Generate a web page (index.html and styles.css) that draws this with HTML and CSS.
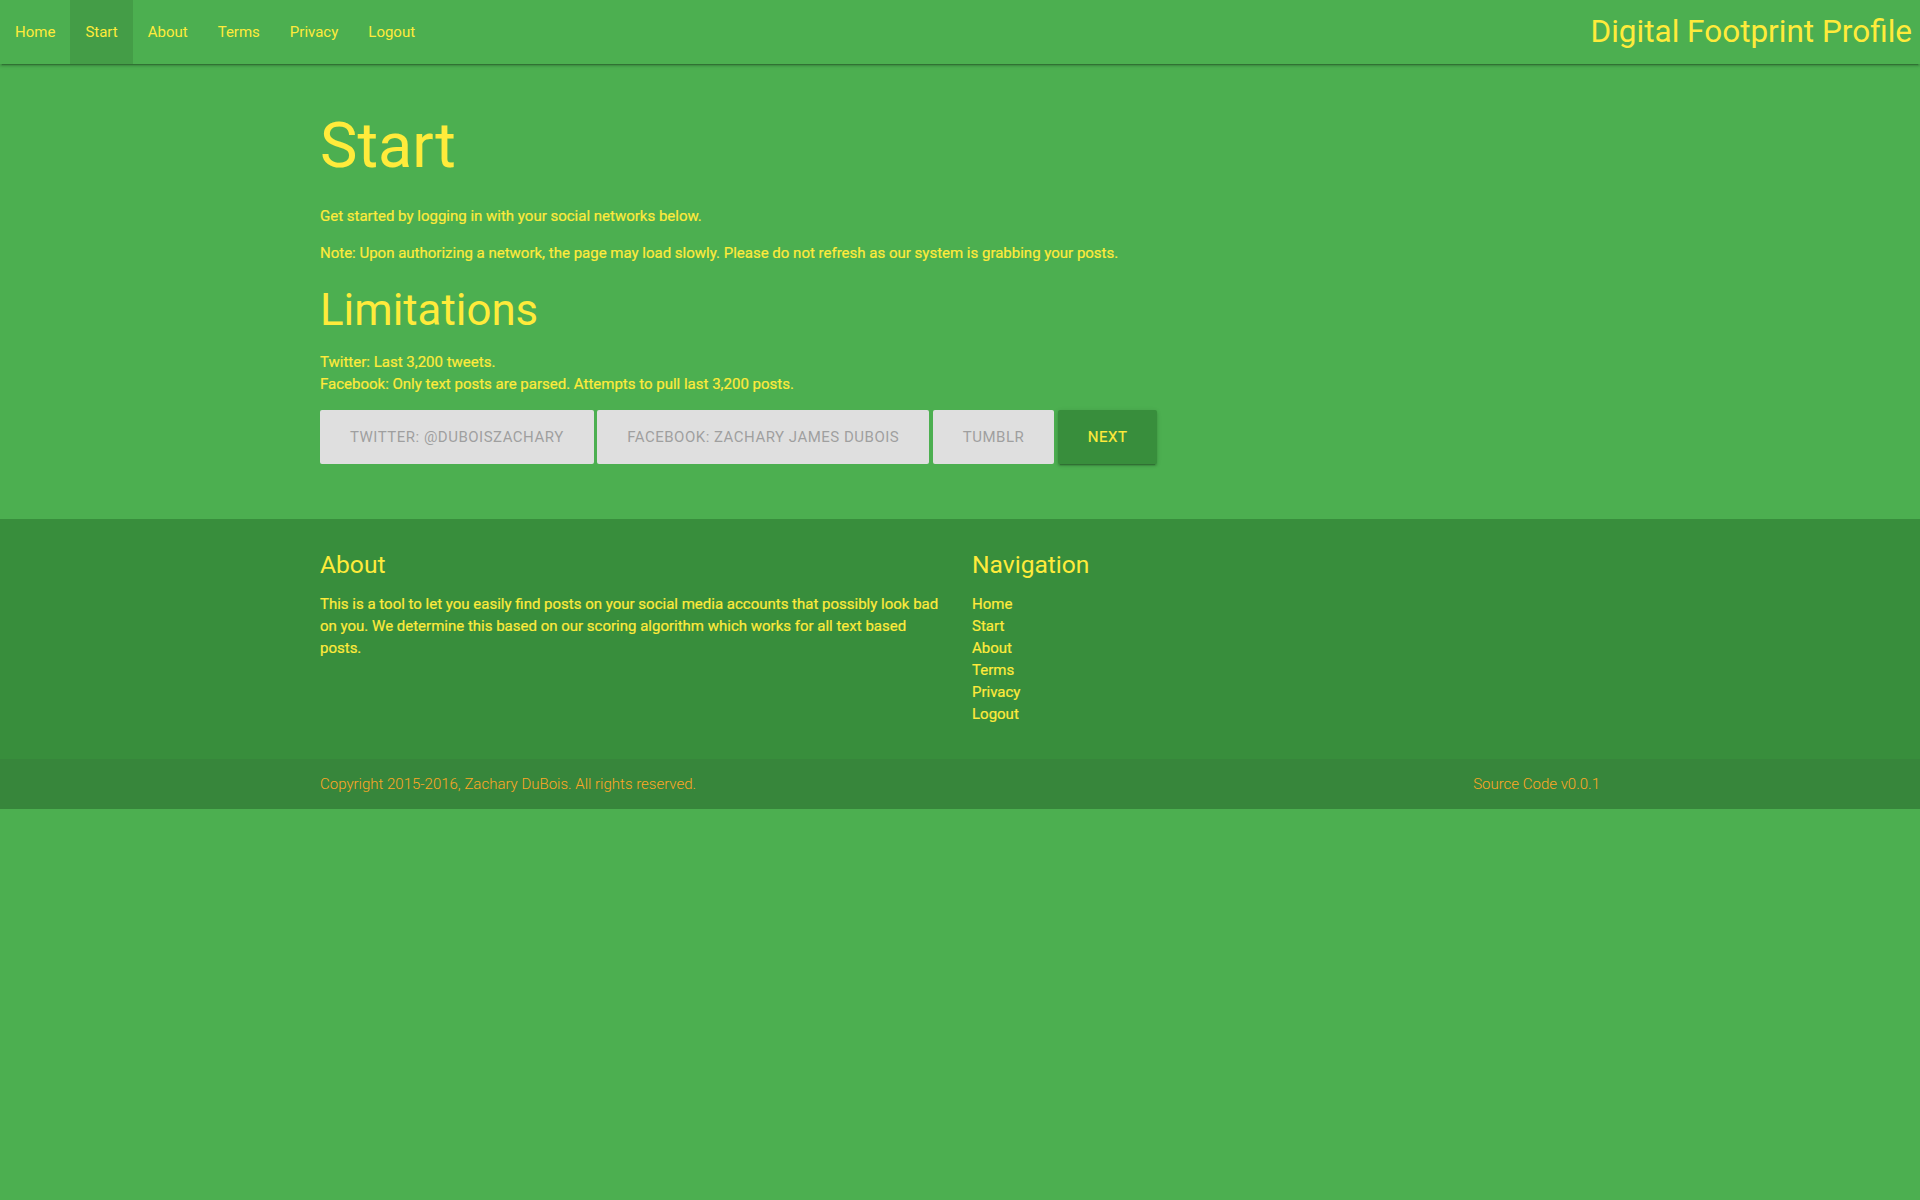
FILE: index.html
```html
<!DOCTYPE html>
<html lang="en">
<head>
<meta charset="utf-8">
<title>Digital Footprint Profile</title>
<link rel="stylesheet" href="styles.css">
</head>
<body>
<nav class="topnav">
  <ul class="nav-links">
    <li><a href="#">Home</a></li>
    <li class="active"><a href="#">Start</a></li>
    <li><a href="#">About</a></li>
    <li><a href="#">Terms</a></li>
    <li><a href="#">Privacy</a></li>
    <li><a href="#">Logout</a></li>
  </ul>
  <a class="brand" href="#">Digital Footprint Profile</a>
</nav>

<main class="container">
  <div class="section">
    <h1 class="title">Start</h1>
    <p>Get started by logging in with your social networks below.</p>
    <p>Note: Upon authorizing a network, the page may load slowly. Please do not refresh as our system is grabbing your posts.</p>
    <h3 class="subtitle">Limitations</h3>
    <p class="limits">Twitter: Last 3,200 tweets.<br>Facebook: Only text posts are parsed. Attempts to pull last 3,200 posts.</p>
    <div class="buttons">
      <a class="btn btn-disabled">Twitter: @duboiszachary</a>
      <a class="btn btn-disabled">Facebook: Zachary James DuBois</a>
      <a class="btn btn-disabled">Tumblr</a>
      <a class="btn btn-next">Next</a>
    </div>
  </div>
</main>

<footer class="page-footer">
  <div class="container footer-cols">
    <div class="footer-col">
      <h5 class="footer-title">About</h5>
      <p class="footer-text">This is a tool to let you easily find posts on your social media accounts that possibly look bad on you. We determine this based on our scoring algorithm which works for all text based posts.</p>
    </div>
    <div class="footer-col">
      <h5 class="footer-title">Navigation</h5>
      <ul class="footer-links">
        <li><a href="#">Home</a></li>
        <li><a href="#">Start</a></li>
        <li><a href="#">About</a></li>
        <li><a href="#">Terms</a></li>
        <li><a href="#">Privacy</a></li>
        <li><a href="#">Logout</a></li>
      </ul>
    </div>
  </div>
  <div class="footer-copyright">
    <div class="container copy-row">
      <span>Copyright 2015-2016, Zachary DuBois. All rights reserved.</span>
      <a href="#">Source Code v0.0.1</a>
    </div>
  </div>
</footer>
</body>
</html>
```

FILE: styles.css
```css
html, body {
  margin: 0;
  padding: 0;
}
body {
  background: #4caf50;
  color: #ffeb3b;
  font-family: Roboto, "Noto Sans", sans-serif;
  font-size: 15px;
  line-height: 22px;
  font-weight: 400;
}
a {
  color: #ffeb3b;
  text-decoration: none;
}
p, .footer-links a, .btn-next {
  -webkit-text-stroke: 0.2px #ffeb3b;
}

/* top navigation */
.topnav {
  height: 64px;
  background: #4caf50;
  display: flex;
  justify-content: space-between;
  align-items: stretch;
  box-shadow: 0 2px 2px 0 rgba(0,0,0,0.14), 0 1px 5px 0 rgba(0,0,0,0.12), 0 3px 1px -2px rgba(0,0,0,0.2);
  position: relative;
  z-index: 2;
}
.nav-links {
  list-style: none;
  margin: 0;
  padding: 0;
  display: flex;
}
.nav-links li a {
  display: block;
  padding: 0 15px;
  line-height: 64px;
  font-size: 15px;
}
.nav-links li.active a {
  background: rgba(0,0,0,0.1);
}
.brand {
  font-size: 31.5px;
  line-height: 64px;
  margin-right: 8px;
}

/* main */
.container {
  width: 1280px;
  margin: 0 auto;
}
.section {
  padding: 15px 0 15px;
}
.title {
  font-size: 63px;
  font-weight: 400;
  line-height: 110%;
  margin: 31.5px 0 25.2px;
}
.section p {
  margin: 15px 0;
}
.subtitle {
  font-size: 43.8px;
  font-weight: 400;
  line-height: 110%;
  margin: 21.9px 0 17px;
}
.buttons {
  display: flex;
  gap: 3.6px;
  margin: 15px 0 40px;
}
.btn {
  display: inline-block;
  height: 54px;
  line-height: 54px;
  padding: 0 30px;
  border-radius: 2px;
  text-transform: uppercase;
  letter-spacing: 0.5px;
  font-size: 15px;
  white-space: nowrap;
}
.btn-disabled {
  background: #dfdfdf;
  color: #9f9f9f;
}
.btn-next {
  background: #388e3c;
  color: #ffeb3b;
  box-shadow: 0 2px 2px 0 rgba(0,0,0,0.14), 0 1px 5px 0 rgba(0,0,0,0.12), 0 3px 1px -2px rgba(0,0,0,0.2);
}

/* footer */
.page-footer {
  background: #388e3c;
  padding-top: 20px;
}
.footer-cols {
  display: grid;
  grid-template-columns: 1fr 1fr;
  column-gap: 24px;
  padding-bottom: 34px;
}
.footer-title {
  font-size: 24.6px;
  font-weight: 400;
  line-height: 110%;
  margin: 12.3px 0 15px;
}
.footer-text {
  margin: 0;
}
.footer-links {
  list-style: none;
  margin: 0;
  padding: 0;
}
.footer-copyright {
  background: rgba(51,51,51,0.08);
  min-height: 50px;
  display: flex;
  align-items: center;
  color: #ffa726;
  font-weight: 300;
}
.copy-row {
  display: flex;
  justify-content: space-between;
  align-items: center;
}
.copy-row a {
  color: #ffa726;
}
```
